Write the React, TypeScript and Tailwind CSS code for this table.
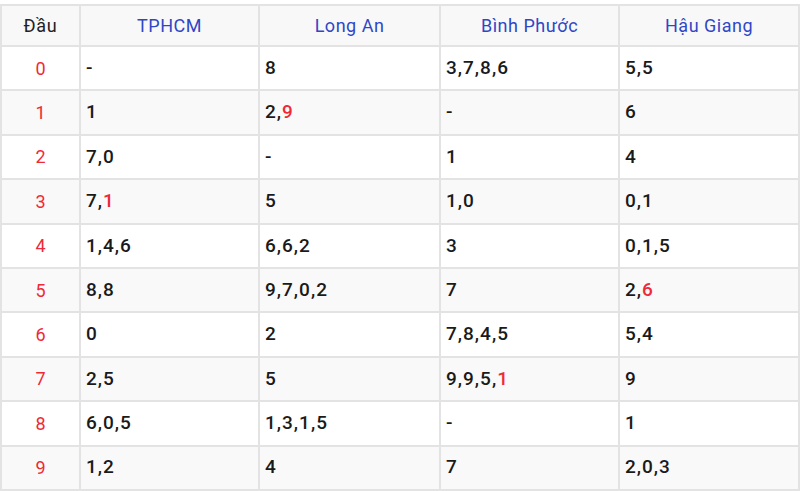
import React from 'react';

type Cell = string;

const provinces = ["TPHCM", "Long An", "Bình Phước", "Hậu Giang"];

// "*" marks the red digit at the end
const rows: Cell[][] = [
  ["-", "8", "3,7,8,6", "5,5"],
  ["1", "2,*9", "-", "6"],
  ["7,0", "-", "1", "4"],
  ["7,*1", "5", "1,0", "0,1"],
  ["1,4,6", "6,6,2", "3", "0,1,5"],
  ["8,8", "9,7,0,2", "7", "2,*6"],
  ["0", "2", "7,8,4,5", "5,4"],
  ["2,5", "5", "9,9,5,*1", "9"],
  ["6,0,5", "1,3,1,5", "-", "1"],
  ["1,2", "4", "7", "2,0,3"],
];

const renderCell = (v: Cell) => {
  const i = v.indexOf("*");
  if (i < 0) return v;
  return (
    <>
      {v.slice(0, i)}
      <span className="text-[#ee2a36]">{v.slice(i + 1)}</span>
    </>
  );
};

const App: React.FC = () => {
  return (
    <div className="w-[800px] h-[491px] bg-white pt-[4px] font-['Roboto',sans-serif]">
      <table className="w-[798px] border-collapse table-fixed">
        <colgroup>
          <col className="w-[79px]" />
          <col className="w-[179px]" />
          <col className="w-[181px]" />
          <col className="w-[179px]" />
          <col className="w-[180px]" />
        </colgroup>
        <thead>
          <tr className="h-[41px] bg-[#f8f8f8]">
            <th className="border-2 border-[#e3e3e3] text-center font-normal text-[18px] tracking-[0.8px] text-[#222]">Đầu</th>
            {provinces.map((p) => (
              <th key={p} className="border-2 border-[#e3e3e3] text-center font-normal text-[18px] tracking-[0.5px] text-[#2f47c6]">
                {p}
              </th>
            ))}
          </tr>
        </thead>
        <tbody>
          {rows.map((r, idx) => (
            <tr key={idx} className={`h-[44.4px] ${idx % 2 === 1 ? 'bg-[#f9f9f9]' : 'bg-white'}`}>
              <td className="border-2 border-[#e3e3e3] text-center text-[18px] text-[#ee2a36]">{idx}</td>
              {r.map((c, j) => (
                <td key={j} className="border-2 border-[#e3e3e3] pl-[5px] text-[19px] tracking-[1px] font-medium text-[#1a1a1a]">
                  {renderCell(c)}
                </td>
              ))}
            </tr>
          ))}
        </tbody>
      </table>
    </div>
  );
};

export default App;
